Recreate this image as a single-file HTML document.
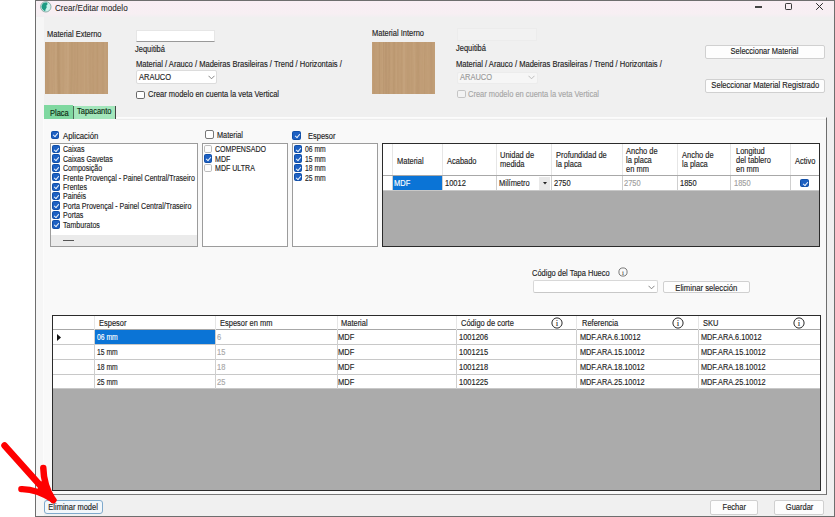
<!DOCTYPE html>
<html><head><meta charset="utf-8">
<style>
*{box-sizing:border-box;margin:0;padding:0}
html,body{width:835px;height:517px;overflow:hidden}
body{background:#fff;position:relative;font-family:"Liberation Sans",sans-serif;font-size:8.5px;color:#1e1e1e}
.a{position:absolute}
.t{position:absolute;white-space:nowrap;line-height:10px;transform:scaleX(.88);transform-origin:0 0;-webkit-text-stroke:0.15px currentColor}
.wood{position:absolute;background:
 repeating-linear-gradient(90deg,rgba(120,80,40,0.06) 0 1px,rgba(0,0,0,0) 1px 3px,rgba(255,240,220,0.07) 3px 5px,rgba(0,0,0,0) 5px 7px),
 repeating-linear-gradient(90deg,rgba(110,70,30,0.05) 0 2px,rgba(0,0,0,0) 2px 6px,rgba(255,245,230,0.05) 6px 8px,rgba(0,0,0,0) 8px 13px),
 #c5a27b}
.cb{position:absolute;width:8.5px;height:8.4px;border:1px solid #5a5a5a;border-radius:1.8px;background:#fff}
.cbc{position:absolute;width:8.5px;height:8.4px;border-radius:1.6px;background:#1d60c2;border:0.6px solid #114fa8}
.cbc:after{content:"";position:absolute;left:2.4px;top:0.9px;width:2.4px;height:3.9px;border:solid #e4eefa;border-width:0 1px 1px 0;transform:rotate(40deg)}
.btn{position:absolute;background:#fdfdfd;border:1px solid #d0d0d0;border-radius:2px;text-align:center;white-space:nowrap}
.btn span{display:inline-block;margin:0 -40px;transform:scaleX(.88);-webkit-text-stroke:0.15px currentColor}
.grid{position:absolute;background:#ababab;border:1px solid #2b2b2b}
.lb{position:absolute;background:#fff;border:1px solid #9c9c9c}
</style></head><body>
<div class="a" style="left:35px;top:0px;width:800px;height:517px;border:1px solid #6e6e6e;background:#f0f0f0"></div>
<div class="a" style="left:36px;top:1px;width:798px;height:16px;background:linear-gradient(#f9eef4,#f7eff3 80%,#f2eff1)"></div>
<div class="a" style="left:36px;top:17px;width:8px;height:499px;background:#f6f6f6"></div>
<svg class="a" style="left:40px;top:1px" width="12" height="12" viewBox="0 0 12 12">
 <circle cx="5.8" cy="5.8" r="5.2" fill="#c9f3ec" stroke="#7d9a96" stroke-width="0.8"/>
 <path d="M2.2 3.5 C3 1.8 5 1 7.2 1.8 L7.6 3.2 L6.4 4.6 L6.7 6.4 L5.6 8.2 L5.2 10.2 C3.5 9.8 1.6 8 1.5 5.6 Z" fill="#1d9a83"/>
</svg>
<div class="t" style="left:55.3px;top:2.8px;font-size:9.5px;color:#222;transform:scaleX(.855);-webkit-text-stroke:0.05px #222">Crear/Editar modelo</div>
<div class="a" style="left:755.2px;top:6.4px;width:6.5px;height:1.2px;background:#444"></div>
<div class="a" style="left:785.1px;top:3.2px;width:7px;height:7px;border:1.1px solid #3a3a3a;border-radius:1.2px"></div>
<svg class="a" style="left:816px;top:3px" width="7" height="7" viewBox="0 0 7 7"><path d="M0.2 0.2 L6.8 6.8 M6.8 0.2 L0.2 6.8" stroke="#2a2a2a" stroke-width="1"/></svg>
<div class="t" style="left:46.7px;top:28.5px;">Material Externo</div>
<svg class="a" style="left:45px;top:42px" width="63" height="52" viewBox="0 0 63 52"><rect width="63" height="52" fill="#c09d76"/><path d="M0.1 0 Q0.2 26 -0.4 52 H0.6 Q1.3 26 1.2 0Z" fill="#7a5530" fill-opacity="0.064"/><path d="M1.8 0 Q1.2 26 1.6 52 H3.8 Q3.4 26 4.0 0Z" fill="#7a5530" fill-opacity="0.041"/><path d="M4.9 0 Q4.6 26 4.8 52 H6.6 Q6.4 26 6.7 0Z" fill="#f0dcc0" fill-opacity="0.032"/><path d="M7.5 0 Q7.0 26 8.1 52 H8.8 Q7.7 26 8.3 0Z" fill="#f0dcc0" fill-opacity="0.081"/><path d="M9.9 0 Q9.4 26 9.8 52 H11.8 Q11.3 26 11.9 0Z" fill="#f0dcc0" fill-opacity="0.090"/><path d="M12.1 0 Q12.0 26 13.0 52 H15.3 Q14.4 26 14.5 0Z" fill="#7a5530" fill-opacity="0.090"/><path d="M15.7 0 Q15.6 26 15.9 52 H17.7 Q17.4 26 17.5 0Z" fill="#f0dcc0" fill-opacity="0.044"/><path d="M19.2 0 Q19.7 26 19.1 52 H21.4 Q22.0 26 21.6 0Z" fill="#f0dcc0" fill-opacity="0.075"/><path d="M21.8 0 Q22.0 26 21.4 52 H23.6 Q24.3 26 24.0 0Z" fill="#f0dcc0" fill-opacity="0.097"/><path d="M26.0 0 Q26.4 26 25.2 52 H26.9 Q28.1 26 27.7 0Z" fill="#7a5530" fill-opacity="0.043"/><path d="M29.2 0 Q29.6 26 28.5 52 H29.9 Q30.9 26 30.6 0Z" fill="#7a5530" fill-opacity="0.032"/><path d="M32.0 0 Q32.4 26 31.7 52 H32.3 Q33.1 26 32.7 0Z" fill="#7a5530" fill-opacity="0.077"/><path d="M33.9 0 Q33.8 26 34.2 52 H35.4 Q35.0 26 35.1 0Z" fill="#f0dcc0" fill-opacity="0.026"/><path d="M36.6 0 Q37.6 26 37.2 52 H38.1 Q38.5 26 37.5 0Z" fill="#f0dcc0" fill-opacity="0.023"/><path d="M38.7 0 Q38.7 26 38.7 52 H40.2 Q40.2 26 40.2 0Z" fill="#f0dcc0" fill-opacity="0.062"/><path d="M41.7 0 Q41.6 26 42.4 52 H44.0 Q43.2 26 43.3 0Z" fill="#f0dcc0" fill-opacity="0.054"/><path d="M44.7 0 Q43.9 26 44.8 52 H46.4 Q45.5 26 46.4 0Z" fill="#7a5530" fill-opacity="0.021"/><path d="M47.8 0 Q47.4 26 47.9 52 H48.6 Q48.1 26 48.5 0Z" fill="#7a5530" fill-opacity="0.070"/><path d="M50.4 0 Q49.5 26 49.8 52 H50.5 Q50.1 26 51.0 0Z" fill="#f0dcc0" fill-opacity="0.025"/><path d="M51.7 0 Q52.0 26 51.6 52 H52.8 Q53.2 26 52.9 0Z" fill="#7a5530" fill-opacity="0.049"/><path d="M54.1 0 Q53.6 26 53.6 52 H55.7 Q55.6 26 56.2 0Z" fill="#f0dcc0" fill-opacity="0.022"/><path d="M57.8 0 Q57.0 26 57.4 52 H58.5 Q58.0 26 58.9 0Z" fill="#7a5530" fill-opacity="0.035"/><path d="M59.1 0 Q59.2 26 59.6 52 H61.8 Q61.4 26 61.3 0Z" fill="#f0dcc0" fill-opacity="0.055"/></svg>
<div class="a" style="left:136px;top:29.7px;width:79px;height:12.8px;background:#fff;border:1px solid #e6e6e6;border-bottom:1px solid #999"></div>
<div class="t" style="left:135.3px;top:43.5px;">Jequitibá</div>
<div class="t" style="left:135.8px;top:58.5px;transform:scaleX(.891)">Material / Arauco / Madeiras Brasileiras / Trend / Horizontais /</div>
<div class="a" style="left:136px;top:70.4px;width:81px;height:13.4px;background:#fff;border:1px solid #dcdcdc;border-radius:2px"></div>
<div class="t" style="left:139px;top:71.7px;">ARAUCO</div>
<svg class="a" style="left:208px;top:75px" width="7" height="5" viewBox="0 0 7 5"><path d="M0.5 0.8 L3.5 3.8 L6.5 0.8" fill="none" stroke="#777" stroke-width="0.9"/></svg>
<div class="cb" style="left:136px;top:90.7px;border-color:#6a6a6a"></div>
<div class="t" style="left:147.6px;top:88.7px;">Crear modelo en cuenta la veta Vertical</div>
<div class="t" style="left:372px;top:27.5px;">Material Interno</div>
<svg class="a" style="left:372px;top:42px" width="63" height="52" viewBox="0 0 63 52"><rect width="63" height="52" fill="#c09d76"/><path d="M-0.4 0 Q0.1 26 -0.1 52 H1.1 Q1.3 26 0.8 0Z" fill="#f0dcc0" fill-opacity="0.032"/><path d="M1.1 0 Q0.9 26 1.4 52 H3.0 Q2.4 26 2.7 0Z" fill="#7a5530" fill-opacity="0.023"/><path d="M5.2 0 Q4.9 26 4.7 52 H5.5 Q5.7 26 6.1 0Z" fill="#f0dcc0" fill-opacity="0.038"/><path d="M7.2 0 Q7.0 26 7.4 52 H8.1 Q7.6 26 7.9 0Z" fill="#7a5530" fill-opacity="0.089"/><path d="M9.8 0 Q10.0 26 9.5 52 H10.4 Q10.9 26 10.7 0Z" fill="#f0dcc0" fill-opacity="0.067"/><path d="M11.0 0 Q11.3 26 11.1 52 H12.1 Q12.3 26 12.0 0Z" fill="#7a5530" fill-opacity="0.074"/><path d="M13.0 0 Q12.9 26 13.3 52 H15.4 Q15.1 26 15.1 0Z" fill="#7a5530" fill-opacity="0.076"/><path d="M16.4 0 Q16.9 26 16.2 52 H17.3 Q18.1 26 17.6 0Z" fill="#7a5530" fill-opacity="0.098"/><path d="M18.8 0 Q19.4 26 18.6 52 H19.2 Q20.0 26 19.5 0Z" fill="#f0dcc0" fill-opacity="0.073"/><path d="M21.2 0 Q21.6 26 20.9 52 H22.6 Q23.3 26 22.9 0Z" fill="#7a5530" fill-opacity="0.066"/><path d="M24.5 0 Q24.5 26 23.8 52 H24.5 Q25.2 26 25.2 0Z" fill="#f0dcc0" fill-opacity="0.076"/><path d="M25.3 0 Q25.0 26 25.2 52 H27.0 Q26.9 26 27.2 0Z" fill="#7a5530" fill-opacity="0.022"/><path d="M29.4 0 Q28.4 26 29.0 52 H29.9 Q29.2 26 30.3 0Z" fill="#7a5530" fill-opacity="0.040"/><path d="M30.9 0 Q31.0 26 31.0 52 H33.2 Q33.2 26 33.2 0Z" fill="#f0dcc0" fill-opacity="0.086"/><path d="M34.9 0 Q34.7 26 35.2 52 H37.6 Q37.2 26 37.3 0Z" fill="#7a5530" fill-opacity="0.032"/><path d="M38.7 0 Q39.0 26 39.3 52 H40.4 Q40.1 26 39.8 0Z" fill="#7a5530" fill-opacity="0.020"/><path d="M40.9 0 Q42.0 26 41.7 52 H43.3 Q43.6 26 42.5 0Z" fill="#f0dcc0" fill-opacity="0.069"/><path d="M44.4 0 Q45.0 26 44.3 52 H46.4 Q47.1 26 46.5 0Z" fill="#7a5530" fill-opacity="0.051"/><path d="M46.7 0 Q46.4 26 46.8 52 H47.8 Q47.4 26 47.7 0Z" fill="#7a5530" fill-opacity="0.033"/><path d="M48.7 0 Q48.0 26 48.3 52 H49.6 Q49.3 26 50.0 0Z" fill="#f0dcc0" fill-opacity="0.022"/><path d="M51.2 0 Q50.6 26 50.7 52 H52.0 Q51.9 26 52.5 0Z" fill="#f0dcc0" fill-opacity="0.030"/><path d="M52.7 0 Q51.8 26 51.8 52 H52.6 Q52.6 26 53.4 0Z" fill="#7a5530" fill-opacity="0.047"/><path d="M54.6 0 Q55.1 26 55.5 52 H57.1 Q56.7 26 56.2 0Z" fill="#f0dcc0" fill-opacity="0.032"/><path d="M58.1 0 Q58.8 26 58.4 52 H60.3 Q60.7 26 60.0 0Z" fill="#7a5530" fill-opacity="0.041"/><path d="M62.4 0 Q62.5 26 62.2 52 H63.4 Q63.7 26 63.6 0Z" fill="#f0dcc0" fill-opacity="0.038"/></svg>
<div class="a" style="left:457px;top:28.2px;width:80px;height:12.5px;background:#f2f2f2;border:1px solid #ececec"></div>
<div class="t" style="left:456px;top:43px;">Jequitibá</div>
<div class="t" style="left:456.3px;top:58.5px;transform:scaleX(.891)">Material / Arauco / Madeiras Brasileiras / Trend / Horizontais /</div>
<div class="a" style="left:456.5px;top:71.5px;width:81px;height:12.5px;background:#f6f6f6;border:1px solid #ececec;border-radius:2px"></div>
<div class="t" style="left:459.5px;top:72px;color:#9a9a9a">ARAUCO</div>
<svg class="a" style="left:528px;top:75px" width="7" height="5" viewBox="0 0 7 5"><path d="M0.5 0.8 L3.5 3.8 L6.5 0.8" fill="none" stroke="#b5b5b5" stroke-width="0.9"/></svg>
<div class="cb" style="left:457.3px;top:90px;border-color:#c4c4c4;background:#f3f3f3"></div>
<div class="t" style="left:468px;top:88.7px;color:#a6a6a6">Crear modelo en cuenta la veta Vertical</div>
<div class="btn" style="left:705.3px;top:45px;width:119.3px;height:13.5px;line-height:11.5px;"><span style="transform:scaleX(0.88)">Seleccionar Material</span></div>
<div class="btn" style="left:705.3px;top:79.3px;width:119.3px;height:13.5px;line-height:11.5px;"><span style="transform:scaleX(0.895)">Seleccionar Material Registrado</span></div>
<div class="a" style="left:43px;top:117px;width:784px;height:378px;background:#f9f9f9;border:1px solid #fcfcfc;border-bottom:1px solid #7a7a7a;border-right:1px solid #6e6e6e"></div>
<div class="a" style="left:116px;top:119px;width:710px;height:1px;background:#ececec"></div>
<div class="a" style="left:44.3px;top:105.3px;width:29.2px;height:13.5px;background:#7fd8a0"></div>
<div class="a" style="left:73px;top:105.5px;width:43.2px;height:13px;background:#a3e6bb;border-left:1px solid #4a6a58;border-right:1px solid #444"></div>
<div class="t" style="left:50px;top:107.5px;color:#0d2a12">Placa</div>
<div class="t" style="left:76.7px;top:106px;color:#0d2a12">Tapacanto</div>
<div class="cbc" style="left:50.9px;top:130.5px;"></div>
<div class="t" style="left:63px;top:130.5px;transform:scaleX(.91)">Aplicación</div>
<div class="cb" style="left:205px;top:130.2px;border-color:#777;border-radius:2px"></div>
<div class="t" style="left:216.6px;top:130px;transform:scaleX(.86)">Material</div>
<div class="cbc" style="left:292.2px;top:131.3px;"></div>
<div class="t" style="left:307.7px;top:130.5px;">Espesor</div>
<div class="lb" style="left:50px;top:143px;width:148px;height:104px"></div>
<div class="cbc" style="left:51.5px;top:144.8px;"></div>
<div class="t" style="left:62.8px;top:144.2px;transform:scaleX(.83)">Caixas</div>
<div class="cbc" style="left:51.5px;top:154.2px;"></div>
<div class="t" style="left:62.8px;top:153.6px;transform:scaleX(.83)">Caixas Gavetas</div>
<div class="cbc" style="left:51.5px;top:163.7px;"></div>
<div class="t" style="left:62.8px;top:163.1px;transform:scaleX(.83)">Composição</div>
<div class="cbc" style="left:51.5px;top:173.1px;"></div>
<div class="t" style="left:62.8px;top:172.5px;transform:scaleX(.83)">Frente Provençal - Painel Central/Traseiro</div>
<div class="cbc" style="left:51.5px;top:182.5px;"></div>
<div class="t" style="left:62.8px;top:181.9px;transform:scaleX(.83)">Frentes</div>
<div class="cbc" style="left:51.5px;top:192.0px;"></div>
<div class="t" style="left:62.8px;top:191.3px;transform:scaleX(.83)">Painéis</div>
<div class="cbc" style="left:51.5px;top:201.4px;"></div>
<div class="t" style="left:62.8px;top:200.8px;transform:scaleX(.83)">Porta Provençal - Painel Central/Traseiro</div>
<div class="cbc" style="left:51.5px;top:210.8px;"></div>
<div class="t" style="left:62.8px;top:210.2px;transform:scaleX(.83)">Portas</div>
<div class="cbc" style="left:51.5px;top:220.2px;"></div>
<div class="t" style="left:62.8px;top:219.6px;transform:scaleX(.83)">Tamburatos</div>
<div class="a" style="left:51px;top:235px;width:146px;height:11px;background:#ebebeb"></div>
<div class="a" style="left:63px;top:240px;width:11px;height:1px;background:#555"></div>
<div class="lb" style="left:202px;top:143px;width:86px;height:104px"></div>
<div class="cb" style="left:203.8px;top:144.8px;border-color:#bdbdbd;background:#fcfcfc"></div>
<div class="t" style="left:215.4px;top:144.2px;transform:scaleX(.83)">COMPENSADO</div>
<div class="cbc" style="left:203.8px;top:154.2px;"></div>
<div class="t" style="left:215.4px;top:153.6px;transform:scaleX(.83)">MDF</div>
<div class="cb" style="left:203.8px;top:163.7px;border-color:#bdbdbd;background:#fcfcfc"></div>
<div class="t" style="left:215.4px;top:163.1px;transform:scaleX(.83)">MDF ULTRA</div>
<div class="lb" style="left:292px;top:143px;width:86px;height:104px"></div>
<div class="cbc" style="left:293.6px;top:144.8px;"></div>
<div class="t" style="left:305.4px;top:144.2px;transform:scaleX(.8)">06 mm</div>
<div class="cbc" style="left:293.6px;top:154.2px;"></div>
<div class="t" style="left:305.4px;top:153.6px;transform:scaleX(.8)">15 mm</div>
<div class="cbc" style="left:293.6px;top:163.7px;"></div>
<div class="t" style="left:305.4px;top:163.1px;transform:scaleX(.8)">18 mm</div>
<div class="cbc" style="left:293.6px;top:173.1px;"></div>
<div class="t" style="left:305.4px;top:172.5px;transform:scaleX(.8)">25 mm</div>
<div class="grid" style="left:382px;top:143px;width:438px;height:104px"></div>
<div class="a" style="left:383px;top:144px;width:436px;height:31.5px;background:#fff;border-bottom:1px solid #a8a8a8"></div>
<div class="a" style="left:383px;top:175.5px;width:436px;height:15px;background:#fff;border-bottom:1px solid #c8c8c8"></div>
<div class="a" style="left:392px;top:144px;width:1px;height:31px;background:#e6e6e6"></div>
<div class="a" style="left:392px;top:175.5px;width:1px;height:14.5px;background:#cfcfcf"></div>
<div class="a" style="left:441.5px;top:144px;width:1px;height:31px;background:#e6e6e6"></div>
<div class="a" style="left:441.5px;top:175.5px;width:1px;height:14.5px;background:#cfcfcf"></div>
<div class="a" style="left:495.5px;top:144px;width:1px;height:31px;background:#e6e6e6"></div>
<div class="a" style="left:495.5px;top:175.5px;width:1px;height:14.5px;background:#cfcfcf"></div>
<div class="a" style="left:551px;top:144px;width:1px;height:31px;background:#e6e6e6"></div>
<div class="a" style="left:551px;top:175.5px;width:1px;height:14.5px;background:#cfcfcf"></div>
<div class="a" style="left:621.5px;top:144px;width:1px;height:31px;background:#e6e6e6"></div>
<div class="a" style="left:621.5px;top:175.5px;width:1px;height:14.5px;background:#cfcfcf"></div>
<div class="a" style="left:677.2px;top:144px;width:1px;height:31px;background:#e6e6e6"></div>
<div class="a" style="left:677.2px;top:175.5px;width:1px;height:14.5px;background:#cfcfcf"></div>
<div class="a" style="left:730.3px;top:144px;width:1px;height:31px;background:#e6e6e6"></div>
<div class="a" style="left:730.3px;top:175.5px;width:1px;height:14.5px;background:#cfcfcf"></div>
<div class="a" style="left:790.2px;top:144px;width:1px;height:31px;background:#e6e6e6"></div>
<div class="a" style="left:790.2px;top:175.5px;width:1px;height:14.5px;background:#cfcfcf"></div>
<div class="a" style="left:393px;top:175.8px;width:49px;height:14px;background:#0b74d6"></div>
<div class="t" style="left:397px;top:155.8px;">Material</div>
<div class="t" style="left:446.8px;top:155.8px;">Acabado</div>
<div class="t" style="left:500.3px;top:150.4px;">Unidad de</div>
<div class="t" style="left:500.3px;top:158.8px;">medida</div>
<div class="t" style="left:556.2px;top:150.4px;">Profundidad de</div>
<div class="t" style="left:556.2px;top:158.8px;">la placa</div>
<div class="t" style="left:625.8px;top:146.2px;">Ancho de</div>
<div class="t" style="left:625.8px;top:154.9px;">la placa</div>
<div class="t" style="left:625.8px;top:163.6px;">en mm</div>
<div class="t" style="left:682.3px;top:150.4px;">Ancho de</div>
<div class="t" style="left:682.3px;top:158.8px;">la placa</div>
<div class="t" style="left:735.7px;top:146.2px;">Longitud</div>
<div class="t" style="left:735.7px;top:154.9px;">del tablero</div>
<div class="t" style="left:735.7px;top:163.6px;">en mm</div>
<div class="t" style="left:795.3px;top:155.8px;">Activo</div>
<div class="t" style="left:394.2px;top:178.3px;color:#fff">MDF</div>
<div class="t" style="left:444.7px;top:178.3px;color:#1e1e1e">10012</div>
<div class="t" style="left:498.6px;top:178.3px;color:#1e1e1e">Milímetro</div>
<div class="t" style="left:553.5px;top:178.3px;color:#1e1e1e">2750</div>
<div class="t" style="left:623.7px;top:178.3px;color:#a0a0a0">2750</div>
<div class="t" style="left:680.2px;top:178.3px;color:#1e1e1e">1850</div>
<div class="t" style="left:733.5px;top:178.3px;color:#a0a0a0">1850</div>
<div class="a" style="left:539px;top:176.5px;width:11px;height:13px;background:#e9e9e9"></div>
<svg class="a" style="left:543px;top:182px" width="4" height="2.5" viewBox="0 0 4 2.5"><path d="M0 0 H4 L2 2.5Z" fill="#222"/></svg>
<div class="cbc" style="left:800.4px;top:178.7px;width:8.5px;height:8px"></div>
<div class="t" style="left:531.7px;top:268.3px;">Código del Tapa Hueco</div>
<svg class="a" style="left:618px;top:266.5px" width="10" height="10" viewBox="0 0 10 10"><circle cx="5" cy="5" r="4.1" fill="none" stroke="#444" stroke-width="0.7"/><text x="5" y="7.6" text-anchor="middle" font-family="Liberation Serif" font-size="7" fill="#333">i</text></svg>
<div class="a" style="left:532.5px;top:279.8px;width:125px;height:13.4px;background:#fff;border:1px solid #d8d8d8;border-bottom-color:#c8c8c8;border-radius:2px"></div>
<svg class="a" style="left:647.8px;top:285.3px" width="7" height="5" viewBox="0 0 7 5"><path d="M0.5 0.8 L3.5 3.8 L6.5 0.8" fill="none" stroke="#777" stroke-width="0.9"/></svg>
<div class="btn" style="left:662.8px;top:280.6px;width:87.2px;height:12.5px;line-height:12.1px;"><span style="transform:scaleX(0.905)">Eliminar selección</span></div>
<div class="grid" style="left:52px;top:315px;width:768.5px;height:176px"></div>
<div class="a" style="left:53px;top:316px;width:766.5px;height:14px;background:#fff;border-bottom:1px solid #a8a8a8"></div>
<div class="a" style="left:53px;top:330px;width:766.5px;height:15px;background:#fff;border-bottom:1px solid #c8c8c8"></div>
<div class="a" style="left:53px;top:345px;width:766.5px;height:15px;background:#fff;border-bottom:1px solid #c8c8c8"></div>
<div class="a" style="left:53px;top:360px;width:766.5px;height:15px;background:#fff;border-bottom:1px solid #c8c8c8"></div>
<div class="a" style="left:53px;top:375px;width:766.5px;height:14px;background:#fff;border-bottom:1px solid #c8c8c8"></div>
<div class="a" style="left:94.3px;top:316px;width:1px;height:14px;background:#e6e6e6"></div>
<div class="a" style="left:94.3px;top:330px;width:1px;height:58.7px;background:#cfcfcf"></div>
<div class="a" style="left:215.2px;top:316px;width:1px;height:14px;background:#e6e6e6"></div>
<div class="a" style="left:215.2px;top:330px;width:1px;height:58.7px;background:#cfcfcf"></div>
<div class="a" style="left:336.5px;top:316px;width:1px;height:14px;background:#e6e6e6"></div>
<div class="a" style="left:336.5px;top:330px;width:1px;height:58.7px;background:#cfcfcf"></div>
<div class="a" style="left:455.8px;top:316px;width:1px;height:14px;background:#e6e6e6"></div>
<div class="a" style="left:455.8px;top:330px;width:1px;height:58.7px;background:#cfcfcf"></div>
<div class="a" style="left:576.2px;top:316px;width:1px;height:14px;background:#e6e6e6"></div>
<div class="a" style="left:576.2px;top:330px;width:1px;height:58.7px;background:#cfcfcf"></div>
<div class="a" style="left:698.2px;top:316px;width:1px;height:14px;background:#e6e6e6"></div>
<div class="a" style="left:698.2px;top:330px;width:1px;height:58.7px;background:#cfcfcf"></div>
<div class="a" style="left:95px;top:330px;width:120px;height:14px;background:#0b74d6"></div>
<svg class="a" style="left:57px;top:334px" width="4" height="7" viewBox="0 0 4 7"><path d="M0 0 L4 3.5 L0 7Z" fill="#111"/></svg>
<div class="t" style="left:99px;top:318px;">Espesor</div>
<div class="t" style="left:220px;top:318px;">Espesor en mm</div>
<div class="t" style="left:341px;top:318px;">Material</div>
<div class="t" style="left:460.5px;top:318px;">Código de corte</div>
<div class="t" style="left:582px;top:318px;">Referencia</div>
<div class="t" style="left:703px;top:318px;">SKU</div>
<svg class="a" style="left:551px;top:316.5px" width="12" height="12" viewBox="0 0 12 12"><circle cx="6" cy="6" r="5.1" fill="none" stroke="#2a2a2a" stroke-width="1"/><text x="6" y="9.4" text-anchor="middle" font-family="Liberation Serif" font-size="8.8" fill="#1a1a1a" stroke="#1a1a1a" stroke-width="0.08">i</text></svg>
<svg class="a" style="left:672px;top:316.5px" width="12" height="12" viewBox="0 0 12 12"><circle cx="6" cy="6" r="5.1" fill="none" stroke="#2a2a2a" stroke-width="1"/><text x="6" y="9.4" text-anchor="middle" font-family="Liberation Serif" font-size="8.8" fill="#1a1a1a" stroke="#1a1a1a" stroke-width="0.08">i</text></svg>
<svg class="a" style="left:793px;top:316.5px" width="12" height="12" viewBox="0 0 12 12"><circle cx="6" cy="6" r="5.1" fill="none" stroke="#2a2a2a" stroke-width="1"/><text x="6" y="9.4" text-anchor="middle" font-family="Liberation Serif" font-size="8.8" fill="#1a1a1a" stroke="#1a1a1a" stroke-width="0.08">i</text></svg>
<div class="t" style="left:96.5px;top:332px;color:#fff;transform:scaleX(.8)">06 mm</div>
<div class="t" style="left:217px;top:332px;color:#a8a8a8">6</div>
<div class="t" style="left:338px;top:332px;">MDF</div>
<div class="t" style="left:459.3px;top:332px;">1001206</div>
<div class="t" style="left:580.2px;top:332px;transform:scaleX(.86)">MDF.ARA.6.10012</div>
<div class="t" style="left:700.9px;top:332px;transform:scaleX(.86)">MDF.ARA.6.10012</div>
<div class="t" style="left:96.5px;top:347px;color:#1e1e1e;transform:scaleX(.8)">15 mm</div>
<div class="t" style="left:217px;top:347px;color:#a8a8a8">15</div>
<div class="t" style="left:338px;top:347px;">MDF</div>
<div class="t" style="left:459.3px;top:347px;">1001215</div>
<div class="t" style="left:580.2px;top:347px;transform:scaleX(.86)">MDF.ARA.15.10012</div>
<div class="t" style="left:700.9px;top:347px;transform:scaleX(.86)">MDF.ARA.15.10012</div>
<div class="t" style="left:96.5px;top:362px;color:#1e1e1e;transform:scaleX(.8)">18 mm</div>
<div class="t" style="left:217px;top:362px;color:#a8a8a8">18</div>
<div class="t" style="left:338px;top:362px;">MDF</div>
<div class="t" style="left:459.3px;top:362px;">1001218</div>
<div class="t" style="left:580.2px;top:362px;transform:scaleX(.86)">MDF.ARA.18.10012</div>
<div class="t" style="left:700.9px;top:362px;transform:scaleX(.86)">MDF.ARA.18.10012</div>
<div class="t" style="left:96.5px;top:377px;color:#1e1e1e;transform:scaleX(.8)">25 mm</div>
<div class="t" style="left:217px;top:377px;color:#a8a8a8">25</div>
<div class="t" style="left:338px;top:377px;">MDF</div>
<div class="t" style="left:459.3px;top:377px;">1001225</div>
<div class="t" style="left:580.2px;top:377px;transform:scaleX(.86)">MDF.ARA.25.10012</div>
<div class="t" style="left:700.9px;top:377px;transform:scaleX(.86)">MDF.ARA.25.10012</div>
<div class="btn" style="left:44px;top:500px;width:59px;height:14px;line-height:12px;border-color:#7fa9cc;border-radius:3px;background:#f2f7fb"><span style="transform:scaleX(0.88)">Eliminar model</span></div>
<div class="btn" style="left:710px;top:500px;width:48px;height:14.5px;line-height:12.5px;"><span style="transform:scaleX(0.88)">Fechar</span></div>
<div class="btn" style="left:774.4px;top:500px;width:49.5px;height:14.5px;line-height:12.5px;"><span style="transform:scaleX(0.88)">Guardar</span></div>
<svg class="a" style="left:0;top:435px" width="70" height="75" viewBox="0 435 70 75">
 <path d="M4.5 445.5 L47 493" stroke="#fe0000" stroke-width="6.5" stroke-linecap="round" fill="none"/>
 <path d="M43.3 468 C43.5 478 46 489 53 500" stroke="#fe0000" stroke-width="6.5" stroke-linecap="round" fill="none"/>
 <path d="M21.3 489.2 C30 489 42 492.5 53.5 500" stroke="#fe0000" stroke-width="6.2" stroke-linecap="round" fill="none"/>
 <path d="M40 482 L46.5 479 L54 501 L36 494 Z" fill="#fe0000"/>
</svg>
</body></html>
